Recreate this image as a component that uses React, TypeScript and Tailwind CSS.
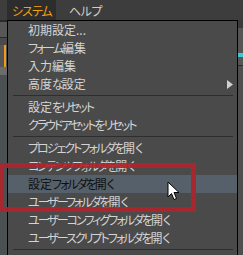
import { ReactNode } from "react"

type Entry = { label?: string; sep?: boolean; sub?: boolean; active?: boolean }

const entries: Entry[] = [
  { label: "初期設定..." },
  { label: "フォーム編集" },
  { label: "入力編集" },
  { label: "高度な設定", sub: true },
  { sep: true },
  { label: "設定をリセット" },
  { label: "クラウドアセットをリセット" },
  { sep: true },
  { label: "プロジェクトフォルダを開く" },
  { label: "コンテンツフォルダを開く" },
  { label: "設定フォルダを開く", active: true },
  { label: "ユーザーフォルダを開く" },
  { label: "ユーザーコンフィグフォルダを開く" },
  { label: "ユーザースクリプトフォルダを開く" },
  { sep: true },
]

// the old bitmap UI font draws kana much narrower than kanji
function Label({ text }: { text: string }) {
  const runs: { kana: boolean; s: string }[] = []
  for (const c of text) {
    const kana = /[\u3040-\u30ff]/.test(c)
    const last = runs[runs.length - 1]
    if (last && last.kana === kana) last.s += c
    else runs.push({ kana, s: c })
  }
  return (
    <>
      {runs.map((r, i) =>
        r.kana ? (
          <span key={i} className="tracking-[-2px]">
            {r.s}
          </span>
        ) : (
          <span key={i}>{r.s}</span>
        )
      )}
    </>
  )
}

function Row({ entry }: { entry: Entry }) {
  if (entry.sep) {
    return (
      <div className="h-[5px] pl-[5px] pr-[4px] pt-[2px]">
        <div className="h-px bg-[#2e2e2e]" />
      </div>
    )
  }
  return (
    <div
      className={
        entry.active
          ? "relative h-[18px] pl-[20px] leading-[18px] bg-[#56606a] text-[#101010]"
          : "relative h-[18px] pl-[20px] leading-[18px] text-[#d4d4d4]"
      }
    >
      <Label text={entry.label ?? ""} />
      {entry.sub && (
        <svg className="absolute right-[4px] top-[5px]" width="6" height="9" viewBox="0 0 6 9">
          <polygon points="0,0 6,4.5 0,9" fill="#d0d0d0" />
        </svg>
      )}
    </div>
  )
}

function Strip({ children }: { children?: ReactNode }) {
  return <div className="flex flex-col">{children}</div>
}

export default function App() {
  return (
    <div className="relative w-[243px] h-[255px] overflow-hidden bg-[#3d3d3d] text-[12px] [font-family:'Noto_Sans_CJK_JP',sans-serif] [font-feature-settings:'palt']">
      {/* menu bar */}
      <div className="flex h-[20px] bg-[#3d3d3d]">
        <div className="w-[7px] shrink-0" />
        <div className="w-[49px] shrink-0 pl-[5px] leading-[22px] tracking-[-1px] bg-[#2d2d2d] text-[#f4a10f]">システム</div>
        <div className="pl-[13px] leading-[22px] tracking-[-0.5px] text-[#cfcfcf]">ヘルプ</div>
      </div>

      <div className="flex h-[235px]">
        {/* left app edge */}
        <Strip>
          <div className="w-[7px] h-[2px] bg-[#2a2a2a]" />
          <div className="w-[7px] h-[15px] bg-[#575757]" />
          <div className="w-[7px] h-px bg-[#2a2a2a]" />
          <div className="w-[7px] h-[7px] bg-[#4a4a4a]" />
          <div className="flex w-[7px] h-[22px] bg-[#555]">
            <div className="w-[4px]" />
            <div className="w-[2px] bg-[#f09a1a]" />
          </div>
          <div className="w-[7px] h-[8px] bg-[#6c6c6c]" />
          <div className="w-[7px] h-[180px] bg-[#4b5153]" />
        </Strip>

        {/* dropdown */}
        <div className="w-[231px] h-[240px] border-l border-r border-t border-black bg-[#4a4a4a]">
          {entries.map((e, i) => (
            <Row key={i} entry={e} />
          ))}
        </div>

        {/* right app edge */}
        <Strip>
          <div className="w-[5px] h-[8px] bg-[#3a3a3a]" />
          <div className="w-[5px] h-[25px] bg-[#555]" />
          <div className="w-[5px] h-[4px] bg-[#41c6d6]" />
          <div className="w-[5px] h-[8px] bg-[#555]" />
          <div className="w-[5px] h-px bg-[#2a2a2a]" />
          <div className="w-[5px] h-[189px] bg-[#4e4e4e]" />
        </Strip>
      </div>

      {/* red annotation box */}
      <div className="absolute left-[-1px] top-[163px] w-[197px] h-[49px] border-[5px] border-[#b0232a]/90" />

      {/* mouse cursor */}
      <svg className="absolute left-[167px] top-[181px]" width="13" height="20" viewBox="0 0 13 20">
        <path d="M1 1 L1 16 L4.5 12.5 L7 18.5 L9.5 17.5 L7 11.5 L12 11.5 Z" fill="#fff" stroke="#000" strokeWidth="1" strokeLinejoin="round" />
      </svg>
    </div>
  )
}
